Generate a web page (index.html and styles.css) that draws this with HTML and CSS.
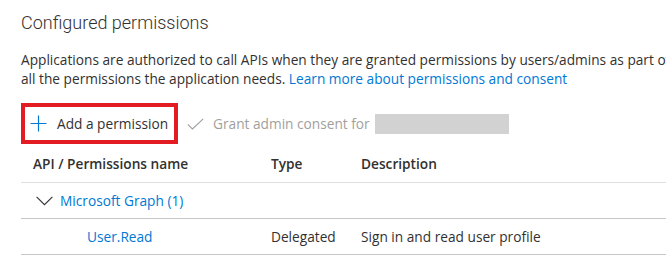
FILE: index.html
```html
<!DOCTYPE html>
<html lang="en">
<head>
<meta charset="utf-8">
<title>Configured permissions</title>
<link rel="stylesheet" href="styles.css">
</head>
<body>
<div class="page">
  <h2 class="title">Configured permissions</h2>
  <p class="intro">Applications are authorized to call APIs when they are granted permissions by users/admins as part of the consent process. The list of configured permissions should include<br>all the permissions the application needs. <a href="#" class="link">Learn more about permissions and consent</a></p>
  <div class="toolbar">
    <button class="cmd cmd-add" type="button">
      <svg class="icon" width="17" height="17" viewBox="0 0 17 17"><path d="M8.5 0.5V16.5M0.5 8.5H16.5" stroke="#0078d4" stroke-width="1.2" fill="none"/></svg>
      <span>Add a permission</span>
    </button>
    <button class="cmd cmd-disabled" type="button">
      <svg class="icon" width="17" height="12" viewBox="0 0 17 12"><path d="M0.8 6.4L5.4 11L16.2 0.8" stroke="#a19f9d" stroke-width="1.1" fill="none"/></svg>
      <span>Grant admin consent for</span>
      <span class="redact"></span>
    </button>
  </div>
  <table class="perms">
    <thead>
      <tr><th class="c-name">API / Permissions name</th><th class="c-type">Type</th><th class="c-desc">Description</th></tr>
    </thead>
    <tbody>
      <tr class="group">
        <td colspan="3">
          <span class="group-label">
            <svg class="chev" width="17" height="10" viewBox="0 0 17 10"><path d="M0.6 0.8L8.5 8.7L16.4 0.8" stroke="#323130" stroke-width="1.1" fill="none"/></svg>
            <a href="#" class="link">Microsoft Graph (1)</a>
          </span>
        </td>
      </tr>
      <tr class="item">
        <td class="c-name"><a href="#" class="link perm-name">User.Read</a></td>
        <td class="c-type">Delegated</td>
        <td class="c-desc">Sign in and read user profile</td>
      </tr>
    </tbody>
  </table>
</div>
</body>
</html>
```

FILE: styles.css
```css
html, body {
  margin: 0;
  padding: 0;
  background: #ffffff;
  overflow: hidden;
}
body {
  font-family: "Open Sans", "Noto Sans", sans-serif;
  color: #323130;
  font-size: 13.7px;
}
.page {
  width: 900px;
  padding: 0 0 0 21px;
}
.title {
  margin: 0;
  padding-top: 10px;
  font-family: Roboto, "Open Sans", sans-serif;
  font-size: 18px;
  font-weight: 300;
  line-height: 26px;
  color: #323130;
}
.intro {
  margin: 14px 0 0;
  line-height: 19px;
  white-space: nowrap;
}
.link {
  color: #0078d4;
  text-decoration: none;
}
.toolbar {
  display: flex;
  align-items: center;
  margin-top: 15px;
  height: 41px;
}
.cmd {
  display: flex;
  align-items: center;
  height: 41px;
  border: 0;
  background: transparent;
  font: inherit;
  color: #323130;
  padding: 0;
}
.cmd-add {
  box-sizing: border-box;
  width: 157px;
  border: 4px solid #e31b23;
  padding-left: 5px;
  gap: 10px;
}
.cmd-disabled {
  padding-left: 9px;
  gap: 9px;
  color: #a19f9d;
}
.redact {
  display: inline-block;
  width: 134px;
  height: 20px;
  background: #d2d2d2;
  margin-left: -4px;
}
.perms {
  border-collapse: collapse;
  width: 645px;
}
.perms th, .perms td {
  padding: 0 0 0 12px;
  text-align: left;
  vertical-align: middle;
}
.perms th {
  height: 38px;
  font-weight: 600;
  color: #323130;
  border-bottom: 1px solid #e1dfdd;
}
.perms th.c-name, .perms td.c-name { width: 226px; }
.perms th.c-type, .perms td.c-type { width: 78px; }
.group td {
  height: 35px;
  padding-left: 15px;
  border-bottom: 1px solid #c8c6c4;
}
.group-label {
  display: flex;
  align-items: center;
  gap: 7px;
}
.item td {
  height: 35px;
  border-bottom: 1px solid #c8c6c4;
}
.perm-name {
  padding-left: 54px;
}
```
